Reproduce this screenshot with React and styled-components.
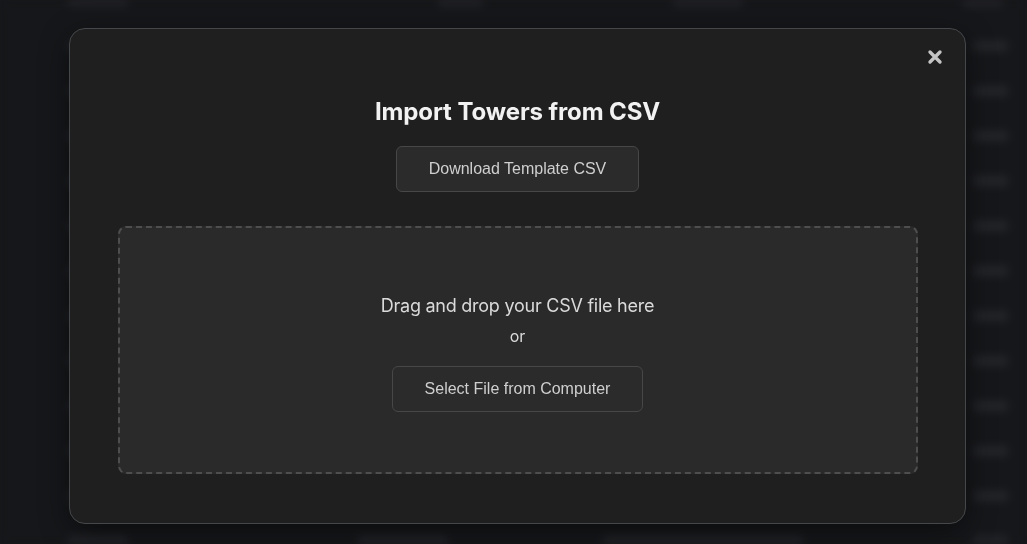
import React from "react";
import styled, { createGlobalStyle } from "styled-components";

const Global = createGlobalStyle`
  html, body { margin: 0; padding: 0; background: #16171a; height: 100%; overflow: hidden; }
  body { font-family: Inter, "Noto Sans", sans-serif; }
  * { box-sizing: border-box; }
`;

const Page = styled.div`
  width: 100vw;
  height: 100vh;
  background: #16171a;
  overflow: hidden;
  filter: blur(4px);
`;

const Table = styled.div`
  display: flex;
  flex-direction: column;
  margin-top: -22px;
`;

const Row = styled.div`
  display: grid;
  grid-template-columns: 290px 245px 360px 1fr;
  align-items: center;
  height: 45px;
  padding-left: 68px;
`;

const Blob = styled.div`
  height: 10px;
  width: ${(p) => p.$w}px;
  margin-left: ${(p) => p.$ml || 0}px;
  border-radius: 3px;
  background: #242529;
`;

const Overlay = styled.div`
  position: fixed;
  inset: 0;
  display: flex;
  align-items: flex-start;
  justify-content: center;
  padding-top: 28px;
  padding-left: 8px;
`;

const Modal = styled.div`
  position: relative;
  width: 897px;
  height: 496px;
  background: #1f1f1f;
  border: 1px solid #45484a;
  border-radius: 16px;
  padding: 48px;
  display: flex;
  flex-direction: column;
  align-items: center;
  box-shadow: 0 8px 30px rgba(0, 0, 0, 0.45);
`;

const Close = styled.button`
  position: absolute;
  top: 16px;
  right: 18px;
  width: 24px;
  height: 24px;
  padding: 0;
  border: none;
  background: transparent;
  display: flex;
  align-items: center;
  justify-content: center;
  cursor: pointer;
`;

const Title = styled.h2`
  margin: 20px 0 20px;
  font-family: Inter, "Noto Sans", sans-serif;
  font-weight: 700;
  font-size: 24px;
  line-height: 29px;
  color: #f2f2f2;
  letter-spacing: -0.1px;
`;

const Button = styled.button`
  height: 46px;
  padding: 0 32px;
  background: #2b2b2b;
  border: 1px solid #474747;
  border-radius: 6px;
  color: #cfcfcf;
  font-family: "Liberation Sans", Arial, sans-serif;
  font-size: 16px;
  cursor: pointer;
`;

const DropZone = styled.div`
  margin-top: 34px;
  width: 800px;
  height: 248px;
  border: 2px dashed #4e4e4e;
  border-radius: 8px;
  background: #2a2a2a;
  display: flex;
  flex-direction: column;
  align-items: center;
  justify-content: center;
  padding-top: 4px;
`;

const DropText = styled.p`
  margin: 0;
  font-size: 18px;
  line-height: 27px;
  letter-spacing: -0.25px;
  color: #dadada;
`;

const Or = styled.p`
  margin: 5px 0 18px;
  font-size: 16px;
  line-height: 24px;
  color: #dadada;
`;

const rows = Array.from({ length: 13 }, (_, i) => i);

export default function App() {
  return (
    <>
      <Global />
      <Page aria-hidden="true">
        <Table>
          {rows.map((i) => (
            <Row key={i}>
              <Blob $w={60} />
              <Blob $w={i === 0 ? 45 : 90} $ml={i === 0 ? 80 : 0} />
              <Blob $w={i === 0 ? 70 : 200} $ml={i === 0 ? 70 : 0} />
              <Blob $w={i === 0 ? 40 : 35} $ml={i === 0 ? 0 : 10} />
            </Row>
          ))}
        </Table>
      </Page>
      <Overlay>
        <Modal>
          <Close aria-label="Close">
            <svg width="16" height="16" viewBox="0 0 16 16">
              <path
                d="M3 3 L13 13 M13 3 L3 13"
                stroke="#c4c4c4"
                strokeWidth="3.4"
                strokeLinecap="round"
              />
            </svg>
          </Close>
          <Title>Import Towers from CSV</Title>
          <Button>Download Template CSV</Button>
          <DropZone>
            <DropText>Drag and drop your CSV file here</DropText>
            <Or>or</Or>
            <Button>Select File from Computer</Button>
          </DropZone>
        </Modal>
      </Overlay>
    </>
  );
}
